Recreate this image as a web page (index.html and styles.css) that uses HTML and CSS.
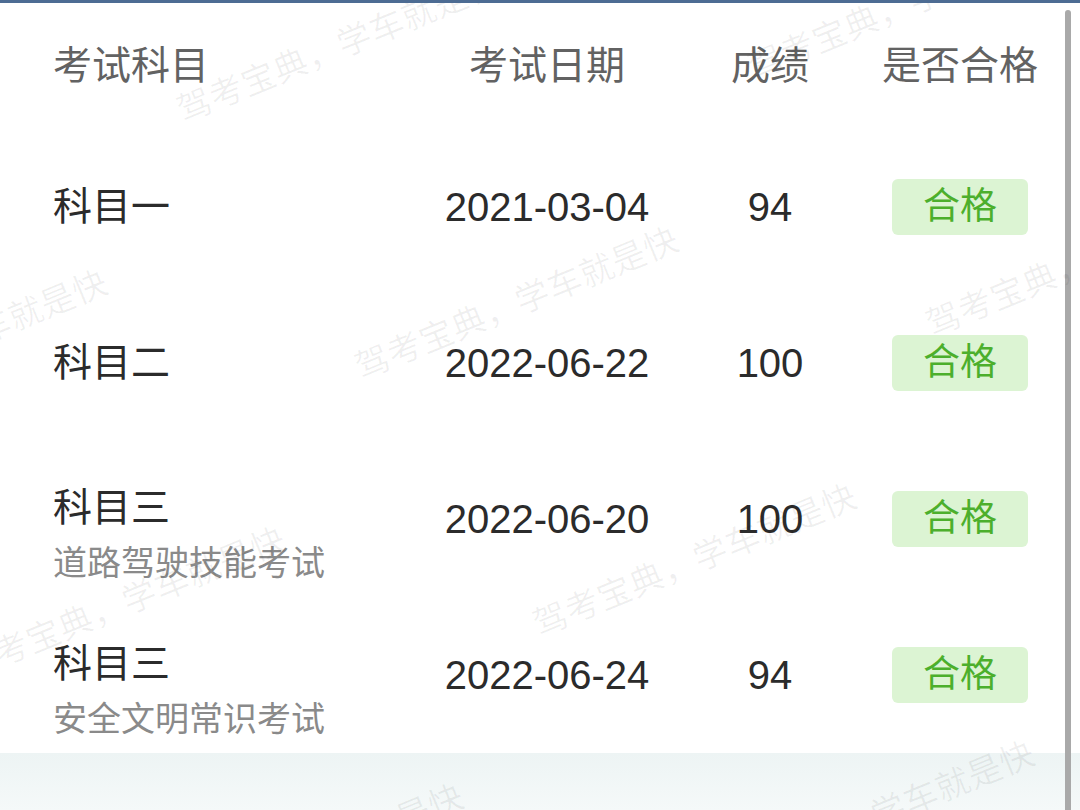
FILE: index.html
```html
<!DOCTYPE html>
<html lang="zh-CN">
<head>
    <meta charset="UTF-8">
    <meta name="viewport" content="width=device-width, initial-scale=1.0">
    <title>考试成绩</title>
    <link rel="stylesheet" href="styles.css">
</head>
<body>
    <div class="page">
        <div class="tabela">
            <div class="linha cabecalho">
                <div class="col-materia">考试科目</div>
                <div class="col-centro">考试日期</div>
                <div class="col-centro">成绩</div>
                <div class="col-centro">是否合格</div>
            </div>
            <div class="linha">
                <div class="col-materia"><div class="titulo">科目一</div></div>
                <div class="col-centro num">2021-03-04</div>
                <div class="col-centro num">94</div>
                <div class="col-centro"><span class="selo">合格</span></div>
            </div>
            <div class="linha">
                <div class="col-materia"><div class="titulo">科目二</div></div>
                <div class="col-centro num">2022-06-22</div>
                <div class="col-centro num">100</div>
                <div class="col-centro"><span class="selo">合格</span></div>
            </div>
            <div class="linha">
                <div class="col-materia com-sub">
                    <div class="titulo">科目三</div>
                    <div class="subtitulo">道路驾驶技能考试</div>
                </div>
                <div class="col-centro num">2022-06-20</div>
                <div class="col-centro num">100</div>
                <div class="col-centro"><span class="selo">合格</span></div>
            </div>
            <div class="linha">
                <div class="col-materia com-sub">
                    <div class="titulo">科目三</div>
                    <div class="subtitulo">安全文明常识考试</div>
                </div>
                <div class="col-centro num">2022-06-24</div>
                <div class="col-centro num">94</div>
                <div class="col-centro"><span class="selo">合格</span></div>
            </div>
        </div>
        <div class="rodape"></div>

        <div class="rolagem"></div>

        <!-- marca d'agua -->
        <div class="marca">
            <span class="wm wm-a">驾考宝典，学车就是快</span>
            <span class="wm wm-b">驾考宝典，学车就是快</span>
            <span class="wm wm-c">驾考宝典，学车就是快</span>
            <span class="wm wm-d">驾考宝典，学车就是快</span>
            <span class="wm wm-e">驾考宝典，学车就是快</span>
            <span class="wm wm-f">驾考宝典，学车就是快</span>
            <span class="wm wm-g">驾考宝典，学车就是快</span>
            <span class="wm wm-h">驾考宝典，学车就是快</span>
            <span class="wm wm-i">驾考宝典，学车就是快</span>
        </div>
    </div>
</body>
</html>
```

FILE: styles.css
```css
body {
    margin: 0;
    background: #ffffff;
    font-family: "Liberation Sans", "Noto Sans CJK SC", sans-serif;
}
.page {
    position: relative;
    width: 1080px;
    height: 810px;
    overflow: hidden;
    border-top: 3px solid #4d6c93;
    box-sizing: border-box;
    display: flex;
    flex-direction: column;
}
.tabela {
    display: flex;
    flex-direction: column;
}
.linha {
    display: grid;
    grid-template-columns: 381px 226px 220px 160px;
    padding-left: 53px;
    height: 156px;
    align-items: center;
    font-size: 39px;
    color: #2b2b2b;
    white-space: nowrap;
}
.cabecalho {
    height: 126px;
    color: #626262;
}
.col-centro {
    text-align: center;
    line-height: 48px;
}
.num {
    font-size: 40px;
}
.col-materia {
    line-height: 48px;
}
.com-sub {
    padding-top: 33px;
}
.subtitulo {
    font-size: 34px;
    line-height: 48px;
    margin-top: 7px;
    color: #8a8a8a;
}
.selo {
    display: inline-block;
    width: 136px;
    height: 56px;
    line-height: 56px;
    border-radius: 6px;
    background-color: #dcf4d3;
    color: #4caf2c;
    font-size: 37px;
}
.rodape {
    flex: 1;
    background: linear-gradient(to bottom, #edf4f4, #f5f9f9);
}
.rolagem {
    position: absolute;
    top: 7px;
    right: 9px;
    width: 6px;
    height: 820px;
    border-radius: 3px;
    background-color: #a9a9a9;
}
.marca {
    position: absolute;
    top: -3px;
    left: 0;
    right: 0;
    bottom: 0;
    pointer-events: none;
}
.wm {
    position: absolute;
    white-space: nowrap;
    font-family: "Noto Sans CJK SC", sans-serif;
    font-size: 34px;
    line-height: 34px;
    letter-spacing: 0.6px;
    color: rgba(0, 0, 0, 0.06);
    transform-origin: 0 50%;
    transform: rotate(-22.3deg);
}
.wm-a { left: 356px; top: 350px; }
.wm-b { left: 534px; top: 607px; }
.wm-c { left: 178px; top: 93px; }
.wm-d { left: 749px; top: 50px; }
.wm-e { left: 927px; top: 307px; }
.wm-f { left: 712px; top: 864px; }
.wm-g { left: -215px; top: 393px; }
.wm-h { left: -37px; top: 650px; }
.wm-i { left: 141px; top: 907px; }
```
